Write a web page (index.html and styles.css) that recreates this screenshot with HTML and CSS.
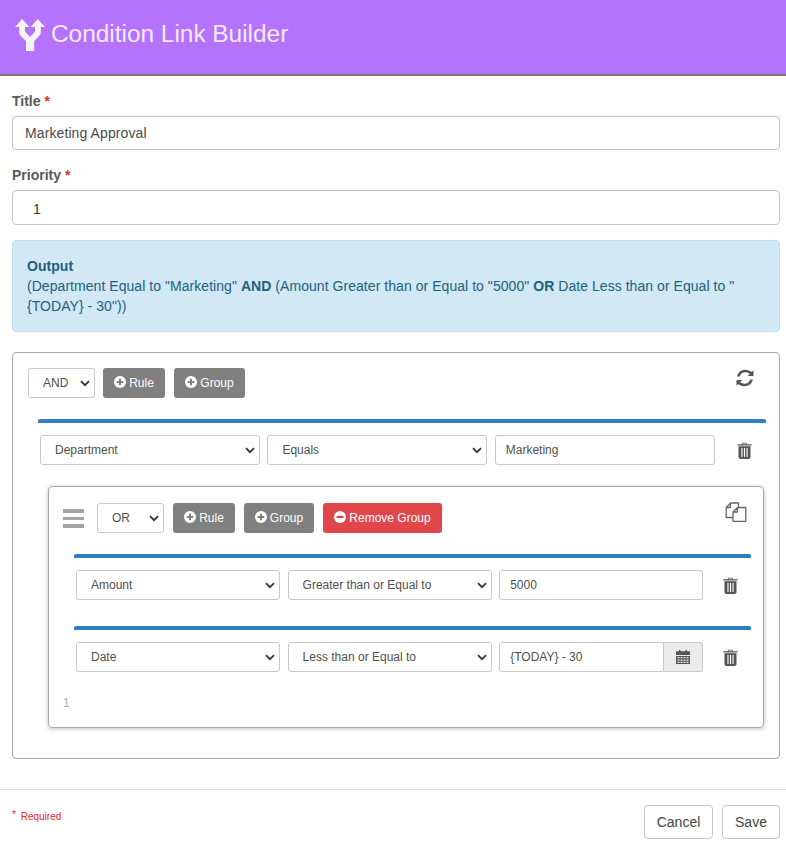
FILE: index.html
```html
<!DOCTYPE html>
<html lang="en">
<head>
<meta charset="utf-8">
<title>Condition Link Builder</title>
<link rel="stylesheet" href="styles.css">
</head>
<body>
<svg class="defs" width="0" height="0" aria-hidden="true">
  <defs>
    <symbol id="trash" viewBox="0 0 16 18">
      <path fill="currentColor" fill-rule="evenodd" d="M5.200 2.200 6 .6h4l.8 1.600H15.600v1.500H.4V2.200zM6.600 1.500l-.4.7h3.600l-.4-.7zM1.600 4.500h12.800V16c0 1.200-.8 2-2 2H3.600c-1.200 0-2-.8-2-2zM4.700 6.300v9.600h1.200V6.300zM7.400 6.300v9.600h1.200V6.300zM10.100 6.300v9.600h1.200V6.300z"/>
    </symbol>
  </defs>
</svg>
<header class="top">
  <svg class="logo" viewBox="0 0 30 32" aria-hidden="true">
    <path fill="#f4f4f4" d="M7.200 0 0 8h4.200v4.500c0 2.200.7 3.600 2.200 5.100l4.600 4.600V32h8.200v-9.800l4.400-4.600c1.500-1.500 2.200-2.900 2.200-5.100V8H30L22.800 0l-7.200 8H20v3.500c0 1-.3 1.600-1 2.300L15 18l-4-4.200c-.7-.7-1-1.300-1-2.300V8h4.400z"/>
  </svg>
  <h1 class="top-title">Condition Link Builder</h1>
</header>
<main class="form">
  <label class="label label-title">Title <span class="star">*</span></label>
  <input class="field field-title" type="text" value="Marketing Approval">
  <label class="label label-priority">Priority <span class="star">*</span></label>
  <input class="field field-priority" type="text" value="1">
  <div class="alert">
    <strong>Output</strong><br>
    (Department Equal to "Marketing" <strong>AND</strong> (Amount Greater than or Equal to "5000" <strong>OR</strong> Date Less than or Equal to "<br>{TODAY} - 30"))
  </div>
  <section class="builder">
    <div class="bar">
      <select class="ctl sel sel-cond"><option>AND</option></select>
      <button class="btn btn-rule" type="button"><svg class="ic" viewBox="0 0 12 12"><circle cx="6" cy="6" r="6" fill="#fff"/><path d="M2.700 6h6.600M6 2.700v6.600" stroke="#808080" stroke-width="2"/></svg>Rule</button>
      <button class="btn btn-group" type="button"><svg class="ic" viewBox="0 0 12 12"><circle cx="6" cy="6" r="6" fill="#fff"/><path d="M2.700 6h6.600M6 2.700v6.600" stroke="#808080" stroke-width="2"/></svg>Group</button>
      <svg class="corner refresh" viewBox="0 0 18 18" aria-hidden="true">
        <path fill="#555" d="M17.500 1.200v5.900h-5.900l2.200-2.200c-1.200-1.100-2.600-1.700-4.400-1.700-2.700 0-4.900 1.600-5.700 4.200H1.100C2 3.300 5.200.7 9.300.7c2.600 0 4.800 1 6.400 2.300zM.5 16.800v-5.900h5.900l-2.200 2.200c1.200 1.100 2.600 1.700 4.400 1.700 2.700 0 4.900-1.600 5.700-4.200h2.600c-.9 4.100-4.100 6.700-8.200 6.700-2.600 0-4.800-1-6.400-2.300z"/>
      </svg>
    </div>
    <div class="rule rule-top">
      <div class="row row-top">
        <select class="ctl sel"><option>Department</option></select>
        <select class="ctl sel"><option>Equals</option></select>
        <input class="ctl inp" type="text" value="Marketing">
        <svg class="trash trash-top"><use href="#trash"/></svg>
      </div>
    </div>
    <div class="group">
      <div class="bar bar-group">
        <div class="drag"><span></span><span></span><span></span></div>
        <select class="ctl sel sel-cond"><option>OR</option></select>
        <button class="btn btn-rule" type="button"><svg class="ic" viewBox="0 0 12 12"><circle cx="6" cy="6" r="6" fill="#fff"/><path d="M2.700 6h6.600M6 2.700v6.600" stroke="#808080" stroke-width="2"/></svg>Rule</button>
        <button class="btn btn-group" type="button"><svg class="ic" viewBox="0 0 12 12"><circle cx="6" cy="6" r="6" fill="#fff"/><path d="M2.700 6h6.600M6 2.700v6.600" stroke="#808080" stroke-width="2"/></svg>Group</button>
        <button class="btn btn-remove" type="button"><svg class="ic" viewBox="0 0 12 12"><circle cx="6" cy="6" r="6" fill="#fff"/><path d="M2.500 6h7" stroke="#e0474c" stroke-width="2.200"/></svg>Remove Group</button>
        <svg class="corner copy" viewBox="0 0 22 20" aria-hidden="true">
          <path fill="none" stroke="#666" stroke-width="1.300" stroke-linejoin="round" d="M8 15.500H1.200V5.500L5.500 1H13.500V5.500M5.500 1V5.500H1.200M12.500 5.500H20.800V19.300H8V10zM12.500 5.500V10H8"/>
        </svg>
      </div>
      <div class="rule rule-first">
        <div class="row row-inner">
          <select class="ctl sel"><option>Amount</option></select>
          <select class="ctl sel"><option>Greater than or Equal to</option></select>
          <input class="ctl inp" type="text" value="5000">
          <svg class="trash trash-inner"><use href="#trash"/></svg>
        </div>
      </div>
      <div class="rule rule-next">
        <div class="row row-inner">
          <select class="ctl sel"><option>Date</option></select>
          <select class="ctl sel"><option>Less than or Equal to</option></select>
          <div class="date">
            <input class="ctl inp inp-date" type="text" value="{TODAY} - 30">
            <span class="addon">
              <svg class="cal" viewBox="0 0 14 14" aria-hidden="true"><path fill="#555" fill-rule="evenodd" d="M3 0h1.500v1.200h5V0H11v1.200h3V5H0V1.200h3zM0 6h14v8H0zM1.500 7v1.300h2V7zM4.500 7v1.300h2V7zM7.500 7v1.300h2V7zM10.500 7v1.300h2V7zM1.500 9.500v1.300h2V9.500zM4.500 9.500v1.300h2V9.500zM7.500 9.500v1.300h2V9.500zM10.500 9.500v1.300h2V9.500zM1.500 11.800V13h2v-1.200zM4.500 11.800V13h2v-1.200zM7.500 11.800V13h2v-1.200zM10.500 11.800V13h2v-1.200z"/></svg>
            </span>
          </div>
          <svg class="trash trash-inner"><use href="#trash"/></svg>
        </div>
      </div>
      <div class="count">1</div>
    </div>
  </section>
</main>
<footer class="foot">
  <div class="req"><span class="req-star">*</span> Required</div>
  <div class="actions">
    <button class="act act-cancel" type="button">Cancel</button>
    <button class="act" type="button">Save</button>
  </div>
</footer>
</body>
</html>
```
FILE: styles.css
```css
* { box-sizing: border-box; }
html, body { margin: 0; padding: 0; }
body {
  font-family: "Liberation Sans", Arial, sans-serif;
  font-size: 14px;
  color: #555;
  background: #fff;
  height: 847px;
  overflow: hidden;
}
.defs { position: absolute; }
.top {
  height: 76px;
  background: #b573fd;
  border-bottom: 2px solid #7c7c7c;
  display: flex;
  align-items: flex-start;
  padding: 19px 0 0 15px;
}
.logo { width: 30px; height: 32px; flex: none; }
.top-title {
  margin: 0 0 0 6px;
  font-size: 24.4px;
  font-weight: 400;
  line-height: 30px;
  color: #f2eafd;
}
.form { padding: 0 6px 0 12px; }
.label {
  display: block;
  font-weight: 700;
  font-size: 14px;
  line-height: 20px;
  color: #5a5a5a;
}
.label-title { margin-top: 15px; }
.label-priority { margin-top: 15px; }
.star { color: #e8262a; }
.field {
  display: block;
  width: 768px;
  border: 1px solid #c4c4c4;
  border-radius: 4px;
  font: 14px/20px "Liberation Sans", Arial, sans-serif;
  letter-spacing: .1px;
  color: #4a4a4a;
  background: #fff;
  outline: none;
}
.field-title { height: 34px; margin-top: 5px; padding: 0 12px; }
.field-priority { height: 35px; margin-top: 5px; padding: 2px 20px 0; color: #333; }
.alert {
  width: 768px;
  height: 92px;
  margin-top: 15px;
  padding: 15px 14px 0;
  background: #d2e8f4;
  border: 1px solid #bfe3ee;
  border-radius: 4px;
  color: #23607f;
  font-size: 14px;
  line-height: 20px;
  letter-spacing: .05px;
}
.builder {
  width: 768px;
  height: 407px;
  margin-top: 20px;
  border: 1px solid #a8a8a8;
  border-radius: 4px;
  padding: 15px 13px 0 15px;
}
.bar { display: flex; align-items: center; height: 30px; position: relative; }
.ctl {
  height: 30px;
  border: 1px solid #c9c9c9;
  border-radius: 3px;
  background-color: #fff;
  font: 12px/18px "Liberation Sans", Arial, sans-serif;
  color: #4f4f4f;
  outline: none;
}
.sel {
  appearance: none;
  -webkit-appearance: none;
  padding: 0 24px 0 14px;
  background-image: url("data:image/svg+xml;utf8,<svg xmlns='http://www.w3.org/2000/svg' width='10' height='7' viewBox='0 0 10 7'><path d='M1 1.200 5 5.200 9 1.200' fill='none' stroke='%23333' stroke-width='1.800'/></svg>");
  background-repeat: no-repeat;
  background-position: right 4px center;
}
.inp { padding: 0 10px; }
.sel-cond { width: 67px; flex: none; }
.btn {
  height: 30px;
  border: 0;
  border-radius: 3px;
  color: #fff;
  font: 12px/18px "Liberation Sans", Arial, sans-serif;
  display: inline-flex;
  align-items: center;
  justify-content: center;
  padding: 0;
  flex: none;
  background: #808080;
}
.ic { width: 12px; height: 12px; margin-right: 3px; margin-top: -2px; }
.btn-rule { width: 62px; margin-left: 8px; }
.btn-group { width: 71px; margin-left: 9px; }
.bar-group .btn-rule { margin-left: 9px; }
.bar-group .btn-group { width: 70px; }
.btn-remove { width: 119px; margin-left: 9px; background: #e0474c; }
.corner { position: absolute; }
.refresh { width: 18px; height: 18px; right: 12px; top: 1px; }
.copy { width: 22px; height: 20px; right: 4px; top: -1px; }
.rule { border-top: 4px solid #2f7fc1; border-radius: 2px; }
.rule-top { margin: 21px 0 0 10px; padding-top: 12px; }
.row { display: grid; align-items: center; margin-left: 2px; }
.row-top {
  grid-template-columns: 220px 220px 220px 30px;
  column-gap: 7.4px;
}
.row-inner {
  grid-template-columns: 204px 204px 204px 30px;
  column-gap: 7.6px;
}
.trash { width: 15px; height: 17px; color: #555; justify-self: start; }
.trash-top { margin-left: 14.500px; }
.trash-inner { margin-left: 12.500px; }
.group {
  position: relative;
  width: 716px;
  height: 242px;
  margin: 21px 0 0 20px;
  border: 1px solid #a8a8a8;
  border-radius: 4px;
  box-shadow: 0 1px 4px rgba(0, 0, 0, .25);
  padding: 16px 12px 0 14px;
}
.bar-group { padding-left: 34px; }
.drag {
  position: absolute;
  left: 0;
  top: 6px;
  display: flex;
  flex-direction: column;
  gap: 4px;
  width: 21px;
}
.drag span { display: block; height: 3.500px; background: #a3a3a3; }
.rule-first { margin: 21px 0 0 11px; padding-top: 12px; }
.rule-next { margin: 26px 0 0 11px; padding-top: 12px; }
.date { display: flex; height: 30px; }
.inp-date { width: 165px; border-radius: 3px 0 0 3px; }
.addon {
  width: 39px;
  height: 30px;
  background: #ebebeb;
  border: 1px solid #c9c9c9;
  border-left: 0;
  border-radius: 0 3px 3px 0;
  display: flex;
  align-items: center;
  justify-content: center;
}
.cal { width: 14px; height: 14px; }
.count {
  font-size: 12px;
  line-height: 14px;
  color: #aaa;
  margin-top: 24px;
}
.foot {
  margin-top: 30px;
  border-top: 1px solid #e0e0e0;
  padding: 15px 6px 0 12px;
  display: flex;
  justify-content: space-between;
  align-items: flex-start;
}
.req {
  font-size: 10px;
  line-height: 14px;
  color: #e0282c;
  margin-top: 5px;
}
.req-star { position: relative; top: -2px; margin-right: 2px; }
.actions { display: flex; gap: 9px; }
.act {
  height: 34px;
  border: 1px solid #c8c8c8;
  border-radius: 4px;
  background: #fff;
  color: #444;
  font: 14px/20px "Liberation Sans", Arial, sans-serif;
  padding: 0;
  width: 58px;
}
.act-cancel { width: 69px; }
```
